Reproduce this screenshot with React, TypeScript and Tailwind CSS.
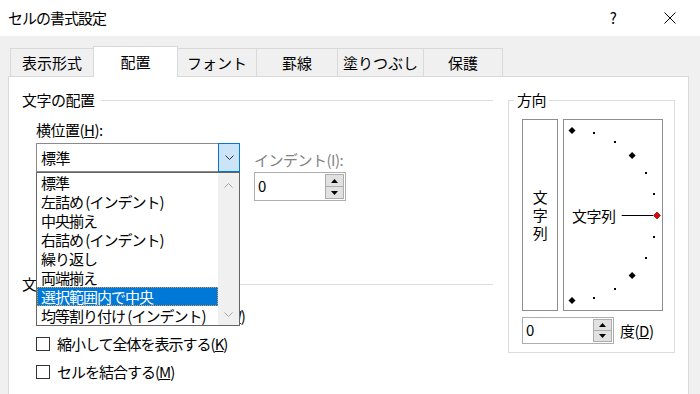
import React from "react";

const Tri = ({ up }: { up?: boolean }) => (
  <svg width="7" height="4" viewBox="0 0 7 4">
    <path d={up ? "M0 4 L3.5 0 L7 4 Z" : "M0 0 L3.5 4 L7 0 Z"} fill="#000" />
  </svg>
);

const Chevron = ({ up, color }: { up?: boolean; color: string }) => (
  <svg width="9" height="5" viewBox="0 0 9 5">
    <path
      d={up ? "M0.5 4.5 L4.5 0.5 L8.5 4.5" : "M0.5 0.5 L4.5 4.5 L8.5 0.5"}
      fill="none"
      stroke={color}
      strokeWidth="1"
    />
  </svg>
);

function Spin({ h }: { h: string }) {
  return (
    <div className={`flex w-[92px] ${h} bg-white border border-[#adadad]`}>
      <div className="flex-1 pl-[3px] flex items-center">0</div>
      <div className="flex flex-col w-[19px] py-[1px] mr-[1px]">
        <div className="flex-1 bg-[#e1e1e1] border border-[#adadad] flex items-center justify-center">
          <Tri up />
        </div>
        <div className="flex-1 bg-[#e1e1e1] border border-[#adadad] border-t-0 flex items-center justify-center">
          <Tri />
        </div>
      </div>
    </div>
  );
}

function Checkbox({ label, k }: { label: string; k: string }) {
  return (
    <div className="h-[28px] flex items-center">
      <div className="w-[14px] h-[14px] border border-[#333] bg-white" />
      <span className="ml-[7px] leading-[20px] whitespace-nowrap tracking-[-1px]">
        {label}(<u>{k}</u>)
      </span>
    </div>
  );
}

const items = [
  "標準",
  "左詰め (インデント)",
  "中央揃え",
  "右詰め (インデント)",
  "繰り返し",
  "両端揃え",
  "選択範囲内で中央",
  "均等割り付け (インデント)",
];

function Arc() {
  const cx = 8;
  const cy = 95.5;
  const r = 85;
  const pts: React.ReactNode[] = [];
  for (let a = 90; a >= -90; a -= 15) {
    const rad = (a * Math.PI) / 180;
    const x = cx + r * Math.cos(rad);
    const y = cy - r * Math.sin(rad);
    if (a === 0) {
      pts.push(
        <polygon
          key={a}
          points={`${x},${y - 3.5} ${x + 3.5},${y} ${x},${y + 3.5} ${x - 3.5},${y}`}
          fill="#e00000"
          stroke="#700000"
          strokeWidth="0.6"
        />
      );
    } else if (a % 45 === 0) {
      pts.push(
        <polygon
          key={a}
          points={`${x},${y - 3.5} ${x + 3.5},${y} ${x},${y + 3.5} ${x - 3.5},${y}`}
          fill="#000"
        />
      );
    } else {
      pts.push(<rect key={a} x={Math.round(x) - 1} y={Math.round(y) - 1} width="2" height="2" fill="#000" />);
    }
  }
  return (
    <svg width="98" height="190" viewBox="0 0 98 190" className="block">
      <text x={cx} y={cy} dominantBaseline="central" fontSize="15" fill="#000">
        文字列
      </text>
      <line x1="57.7" y1={cy} x2="89" y2={cy} stroke="#000" strokeWidth="1" />
      {pts}
    </svg>
  );
}

export default function App() {
  const tabs = [
    { t: "表示形式", w: "w-[84px]" },
    { t: "配置", w: "w-[85px]", sel: true },
    { t: "フォント", w: "w-[80px]" },
    { t: "罫線", w: "w-[82px]" },
    { t: "塗りつぶし", w: "w-[87px]" },
    { t: "保護", w: "w-[80px]" },
  ];
  return (
    <div className="w-[700px] h-[394px] overflow-hidden bg-[#f0f0f0] text-[15px] text-black tracking-[-0.5px] font-['Noto_Sans_CJK_JP',sans-serif]">
      {/* title bar */}
      <div className="h-[36px] bg-white flex items-center pl-[8px]">
        <span className="leading-[20px] tracking-[-1px]">セルの書式設定</span>
        <div className="ml-auto flex items-center pr-[7px]">
          <span className="w-[46px] text-center leading-[20px]">?</span>
          <div className="w-[46px] ml-[11px] flex items-center justify-center">
            <svg width="12" height="12" viewBox="0 0 12 12">
              <path d="M0.5 0.5 L11.5 11.5 M11.5 0.5 L0.5 11.5" stroke="#000" strokeWidth="1" />
            </svg>
          </div>
        </div>
      </div>

      {/* tabs */}
      <div className="h-[40px] flex items-end pl-[10px]">
        {tabs.map((tab, i) => (
          <div
            key={tab.t}
            className={`${tab.w} ${i > 0 ? "-ml-px" : ""} border border-b-0 border-[#d9d9d9] flex items-center justify-center leading-[20px] tracking-normal ${
              tab.sel ? "h-[31px] -mb-px bg-white relative z-10" : "h-[28px] bg-[#f0f0f0]"
            }`}
          >
            {tab.t}
          </div>
        ))}
      </div>

      {/* panel */}
      <div className="ml-[8px] w-[681px] h-[330px] border border-[#d9d9d9] bg-white flex pl-[13px] pt-[13px]">
        {/* left column */}
        <div className="w-[471px]">
          <div className="h-[20px] flex items-center">
            <span className="leading-[20px]">文字の配置</span>
            <div className="flex-1 h-px bg-[#dcdcdc] ml-[6px]" />
          </div>
          <div className="pl-[14px]">
            <div className="mt-[10px] leading-[20px]">
              横位置(<u>H</u>):
            </div>
            <div className="mt-[3px] flex">
              <div className="relative w-[204px] h-[29px] border border-[#8a8a8a] bg-white flex">
                <div className="flex-1 pl-[4px] flex items-center leading-[20px]">標準</div>
                <div className="w-[22px] -my-px -mr-px bg-[#cce4f7] border border-[#0078d7] flex items-center justify-center">
                  <Chevron color="#333" />
                </div>
                {/* dropdown list */}
                <div className="absolute left-[-1px] top-[28px] w-[204px] border border-[#646464] bg-white flex z-20">
                  <div className="w-[181px]">
                    {items.map((it, i) => (
                      <div
                        key={it}
                        className={`h-[19px] leading-[19px] pl-[4px] whitespace-nowrap tracking-[-1px] ${
                          i === 6
                            ? "bg-[#0078d7] text-white outline-1 outline-dotted outline-[#e89b3c] -outline-offset-1"
                            : ""
                        }`}
                      >
                        {it}
                      </div>
                    ))}
                  </div>
                  <div className="w-[21px] bg-[#f0f0f0] flex flex-col items-center justify-between pt-[10px] pb-[8px]">
                    <Chevron up color="#a6a6a6" />
                    <Chevron color="#a6a6a6" />
                  </div>
                </div>
              </div>
              <div className="ml-[14px] pt-[7px]">
                <div className="leading-[20px] text-[#838383]">インデント(I):</div>
                <div className="mt-[2px]">
                  <Spin h="h-[29px]" />
                </div>
              </div>
            </div>
            <div className="mt-[4px] leading-[20px]">
              縦位置(<u>V</u>):
            </div>
            <div className="mt-[3px] w-[204px] h-[29px] border border-[#8a8a8a] bg-white" />
          </div>
          <div className="mt-[17px] h-[20px] flex items-center">
            <span className="leading-[20px]">文字の制御</span>
            <div className="flex-1 h-px bg-[#dcdcdc] ml-[6px]" />
          </div>
          <div className="pl-[14px] mt-[8px]">
            <Checkbox label="折り返して全体を表示する" k="W" />
            <Checkbox label="縮小して全体を表示する" k="K" />
            <Checkbox label="セルを結合する" k="M" />
          </div>
        </div>

        {/* right column */}
        <div className="ml-[15px] w-[167px] self-start">
          <fieldset className="border border-[#dcdcdc] pb-[8px]">
            <legend className="ml-[5px] px-[3px] leading-[20px]">方向</legend>
            <div className="mt-[9px] pl-[13px] flex">
              <div className="w-[36px] h-[192px] border border-[#8e8e8e] flex flex-col items-center justify-center leading-[18px]">
                <span>文</span>
                <span>字</span>
                <span>列</span>
              </div>
              <div className="ml-[5px] w-[100px] h-[192px] border border-[#8e8e8e]">
                <Arc />
              </div>
            </div>
            <div className="mt-[6px] pl-[13px] flex items-center">
              <Spin h="h-[27px]" />
              <span className="ml-[6px] leading-[20px]">
                度(<u>D</u>)
              </span>
            </div>
          </fieldset>
        </div>
      </div>
    </div>
  );
}
